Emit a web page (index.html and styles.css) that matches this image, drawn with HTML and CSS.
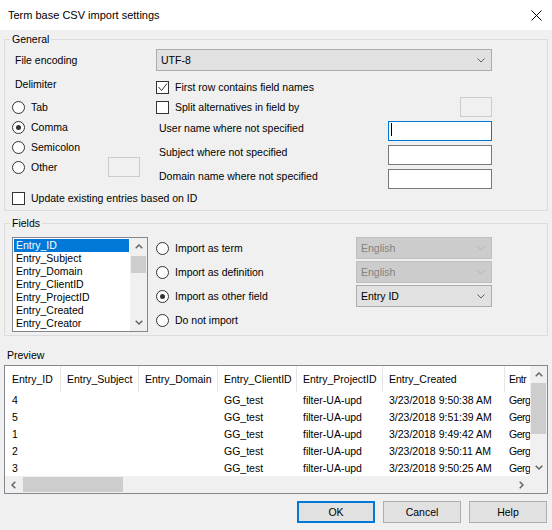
FILE: index.html
```html
<!DOCTYPE html>
<html>
<head>
<meta charset="utf-8">
<title>Term base CSV import settings</title>
<link rel="stylesheet" href="styles.css">
</head>
<body>
<div class="titlebar">
  <span class="title">Term base CSV import settings</span>
  <svg class="close" width="11" height="11" viewBox="0 0 11 11"><path d="M0.5 0.5L10.5 10.5M10.5 0.5L0.5 10.5" stroke="#000" stroke-width="1" fill="none"/></svg>
</div>

<fieldset class="group general">
  <legend>General</legend>
  <div class="gen">
    <div class="gen-left">
      <div class="lrow enc">File encoding</div>
      <div class="lrow delim">Delimiter</div>
      <div class="rrow first"><span class="radio"></span><span>Tab</span></div>
      <div class="rrow"><span class="radio on"></span><span>Comma</span></div>
      <div class="rrow"><span class="radio"></span><span>Semicolon</span></div>
      <div class="rrow"><span class="radio"></span><span>Other</span><span class="tbox off small push"></span></div>
      <div class="rrow update"><span class="check"></span><span>Update existing entries based on ID</span></div>
    </div>
    <div class="gen-right">
      <div class="combo enc-combo"><span>UTF-8</span><svg class="chev" width="8" height="5" viewBox="0 0 8 5"><polyline points="0.5,0.5 4,4 7.5,0.5" fill="none" stroke="#606060" stroke-width="1"/></svg></div>
      <div class="crow first"><span class="check"><svg width="11" height="11" viewBox="0 0 11 11"><polyline points="1.5,5 4.5,8.5 10,1.5" fill="none" stroke="#333" stroke-width="1"/></svg></span><span>First row contains field names</span></div>
      <div class="crow"><span class="check"></span><span>Split alternatives in field by</span><span class="tbox off small push"></span></div>
      <div class="frow first"><span class="flabel">User name where not specified</span><span class="tbox wide focus"><span class="caret"></span></span></div>
      <div class="frow"><span class="flabel">Subject where not specified</span><span class="tbox wide"></span></div>
      <div class="frow"><span class="flabel">Domain name where not specified</span><span class="tbox wide"></span></div>
    </div>
  </div>
</fieldset>

<fieldset class="group fields">
  <legend>Fields</legend>
  <div class="fields-body">
    <div class="listbox">
      <div class="lb-items">
        <div class="lb-item sel">Entry_ID</div>
        <div class="lb-item">Entry_Subject</div>
        <div class="lb-item">Entry_Domain</div>
        <div class="lb-item">Entry_ClientID</div>
        <div class="lb-item">Entry_ProjectID</div>
        <div class="lb-item">Entry_Created</div>
        <div class="lb-item">Entry_Creator</div>
      </div>
      <div class="vscroll lb-scroll">
        <div class="arrow"><svg width="8" height="5" viewBox="0 0 8 5"><polyline points="0.7,4.3 4,1 7.3,4.3" fill="none" stroke="#606060" stroke-width="1.4"/></svg></div>
        <div class="thumb lb-thumb"></div>
        <div class="arrow end"><svg width="8" height="5" viewBox="0 0 8 5"><polyline points="0.7,0.7 4,4 7.3,0.7" fill="none" stroke="#606060" stroke-width="1.4"/></svg></div>
      </div>
    </div>
    <div class="opts">
      <div class="orow"><span class="radio"></span><span>Import as term</span></div>
      <div class="combo off"><span>English</span><svg class="chev" width="8" height="5" viewBox="0 0 8 5"><polyline points="0.5,0.5 4,4 7.5,0.5" fill="none" stroke="#b4b4b4" stroke-width="1"/></svg></div>
      <div class="orow"><span class="radio"></span><span>Import as definition</span></div>
      <div class="combo off"><span>English</span><svg class="chev" width="8" height="5" viewBox="0 0 8 5"><polyline points="0.5,0.5 4,4 7.5,0.5" fill="none" stroke="#b4b4b4" stroke-width="1"/></svg></div>
      <div class="orow"><span class="radio on"></span><span>Import as other field</span></div>
      <div class="combo"><span>Entry ID</span><svg class="chev" width="8" height="5" viewBox="0 0 8 5"><polyline points="0.5,0.5 4,4 7.5,0.5" fill="none" stroke="#606060" stroke-width="1"/></svg></div>
      <div class="orow"><span class="radio"></span><span>Do not import</span></div>
    </div>
  </div>
</fieldset>

<div class="preview-label">Preview</div>
<div class="listview">
  <div class="lv-content">
    <div class="lv-row lv-head">
      <div>Entry_ID</div><div>Entry_Subject</div><div>Entry_Domain</div><div>Entry_ClientID</div><div>Entry_ProjectID</div><div>Entry_Created</div><div>Entr</div>
    </div>
    <div class="lv-row"><div>4</div><div></div><div></div><div>GG_test</div><div>filter-UA-upd</div><div>3/23/2018 9:50:38 AM</div><div>Gerg</div></div>
    <div class="lv-row"><div>5</div><div></div><div></div><div>GG_test</div><div>filter-UA-upd</div><div>3/23/2018 9:51:39 AM</div><div>Gerg</div></div>
    <div class="lv-row"><div>1</div><div></div><div></div><div>GG_test</div><div>filter-UA-upd</div><div>3/23/2018 9:49:42 AM</div><div>Gerg</div></div>
    <div class="lv-row"><div>2</div><div></div><div></div><div>GG_test</div><div>filter-UA-upd</div><div>3/23/2018 9:50:11 AM</div><div>Gerg</div></div>
    <div class="lv-row"><div>3</div><div></div><div></div><div>GG_test</div><div>filter-UA-upd</div><div>3/23/2018 9:50:25 AM</div><div>Gerg</div></div>
  </div>
  <div class="vscroll lv-vscroll">
    <div class="arrow"><svg width="8" height="5" viewBox="0 0 8 5"><polyline points="0.7,4.3 4,1 7.3,4.3" fill="none" stroke="#606060" stroke-width="1.4"/></svg></div>
    <div class="thumb lv-vthumb"></div>
    <div class="arrow end"><svg width="8" height="5" viewBox="0 0 8 5"><polyline points="0.7,0.7 4,4 7.3,0.7" fill="none" stroke="#606060" stroke-width="1.4"/></svg></div>
  </div>
  <div class="hscroll">
    <div class="arrow"><svg width="5" height="8" viewBox="0 0 5 8"><polyline points="4.3,0.7 1,4 4.3,7.3" fill="none" stroke="#606060" stroke-width="1.4"/></svg></div>
    <div class="thumb lv-hthumb"></div>
    <div class="arrow end"><svg width="5" height="8" viewBox="0 0 5 8"><polyline points="0.7,0.7 4,4 0.7,7.3" fill="none" stroke="#606060" stroke-width="1.4"/></svg></div>
  </div>
  <div class="corner"></div>
</div>

<div class="buttons">
  <div class="btn default">OK</div>
  <div class="btn">Cancel</div>
  <div class="btn">Help</div>
</div>
</body>
</html>
```

FILE: styles.css
```css
html, body {
  margin: 0;
  padding: 0;
}
body {
  width: 552px;
  height: 530px;
  overflow: hidden;
  background: #f0f0f0;
  font-family: "Liberation Sans", Arial, sans-serif;
  font-size: 10.5px;
  line-height: 12px;
  color: #000;
}
* { box-sizing: border-box; }

.titlebar {
  height: 30px;
  background: #fff;
  display: flex;
  align-items: center;
  justify-content: space-between;
  padding: 0 10px 0 8px;
}
.title {
  font-size: 11px;
  line-height: 14px;
}
.close { display: block; }

.group {
  margin: 3px 4px 0;
  padding: 0;
  border: 1px solid #dcdcdc;
  min-width: 0;
}
.group legend {
  margin-left: 5px;
  padding: 0 2px;
  line-height: 12px;
}
.general { height: 178px; }
.fields { height: 119px; margin-top: 6px; }

.gen { display: flex; }
.gen-left { width: 151px; flex: none; }
.gen-right { flex: 1; padding-right: 55px; }

.lrow {
  height: 20px;
  display: flex;
  align-items: center;
  padding-left: 10px;
}
.lrow.enc { margin-top: 4px; height: 22px; }
.lrow.delim { margin-top: 3px; }

.rrow {
  height: 20px;
  display: flex;
  align-items: center;
  gap: 6px;
  padding-left: 7px;
  padding-right: 16px;
  white-space: nowrap;
}
.rrow.first { margin-top: 3px; }
.rrow.update { margin-top: 11px; }

.radio {
  flex: none;
  width: 13px;
  height: 13px;
  border: 1px solid #333;
  border-radius: 50%;
  background: #fff;
  display: flex;
  align-items: center;
  justify-content: center;
}
.radio.on::after {
  content: "";
  width: 5px;
  height: 5px;
  border-radius: 50%;
  background: #333;
}
.check {
  flex: none;
  width: 13px;
  height: 13px;
  border: 1px solid #333;
  background: #fff;
  display: flex;
}
.check svg { display: block; }

.tbox {
  display: flex;
  align-items: flex-start;
  height: 20px;
  background: #fff;
  border: 1px solid #7a7a7a;
  flex: none;
}
.tbox.small { width: 32px; }
.tbox.wide { width: 104px; }
.tbox.off { background: #f0f0f0; border-color: #cccccc; }
.tbox.focus { border-color: #0078d7; padding: 1px 0 0 2px; }
.caret { width: 1px; height: 13px; background: #000; }
.push { margin-left: auto; }

.combo {
  height: 22px;
  border: 1px solid #adadad;
  background: #e1e1e1;
  display: flex;
  align-items: center;
  padding: 0 6px 0 4px;
}
.combo .chev { margin-left: auto; display: block; }
.combo.off { background: #cccccc; border-color: #bfbfbf; color: #838383; }
.enc-combo { margin-top: 4px; }

.crow {
  height: 20px;
  display: flex;
  align-items: center;
  gap: 6px;
}
.crow.first { margin-top: 6px; }

.frow {
  height: 20px;
  margin-top: 4px;
  display: flex;
  justify-content: space-between;
  align-items: flex-start;
}
.flabel { padding: 1px 0 0 3px; }

/* Fields */
.fields-body {
  display: flex;
  margin-top: 8px;
  padding-left: 7px;
}
.listbox {
  width: 136px;
  height: 95px;
  border: 1px solid #828790;
  background: #fff;
  display: flex;
}
.lb-items {
  flex: 1;
  padding: 1px;
  overflow: hidden;
}
.lb-item {
  height: 13px;
  line-height: 13px;
  padding-left: 2px;
  white-space: nowrap;
}
.lb-item.sel { background: #0078d7; color: #fff; }

.vscroll {
  width: 17px;
  flex: none;
  background: #f0f0f0;
  display: flex;
  flex-direction: column;
}
.vscroll .arrow {
  height: 17px;
  flex: none;
  display: flex;
  align-items: center;
  justify-content: center;
}
.vscroll .arrow.end { margin-top: auto; }
.vscroll .thumb { margin: 0 1px; background: #cdcdcd; }
.lb-thumb { margin-top: 1px !important; height: 17px; }

.opts {
  margin-left: 8px;
  display: grid;
  grid-template-columns: 200px 136px;
  grid-auto-rows: 22px;
  row-gap: 2px;
}
.orow {
  display: flex;
  align-items: center;
  gap: 6px;
  white-space: nowrap;
}

/* Preview */
.preview-label {
  margin-top: 13px;
  padding-left: 7px;
  height: 12px;
}
.listview {
  margin: 4px 4px 0;
  height: 129px;
  border: 1px solid #828790;
  background: #fff;
  display: grid;
  grid-template-columns: 1fr 17px;
  grid-template-rows: 1fr 17px;
  overflow: hidden;
}
.lv-content { overflow: hidden; min-width: 0; }
.lv-row {
  display: grid;
  grid-template-columns: 56px 78px 79px 79px 86px 122px 25px;
  width: 525px;
  height: 17px;
  line-height: 17px;
  white-space: nowrap;
}
.lv-row > div { padding-left: 6px; overflow: hidden; }
.lv-row > div:first-child { padding-left: 7px; }
.lv-row > div:last-child { padding-left: 4px; letter-spacing: -0.5px; }
.lv-head { height: 26px; line-height: 26px; }
.lv-head > div { border-right: 1px solid #e5e5e5; }
.lv-head > div:last-child { border-right: 0; }

.lv-vscroll { width: 17px; }
.lv-vthumb { height: 51px; }

.hscroll {
  background: #f0f0f0;
  display: flex;
  min-width: 0;
}
.hscroll .arrow {
  width: 17px;
  flex: none;
  display: flex;
  align-items: center;
  justify-content: center;
}
.hscroll .arrow.end { margin-left: auto; }
.lv-hthumb {
  width: 100px;
  margin: 1px 0 1px 1px;
  background: #cdcdcd;
}
.corner { background: #f0f0f0; }

/* Buttons */
.buttons {
  margin-top: 7px;
  display: flex;
  justify-content: flex-end;
  gap: 8px;
  padding-right: 5px;
}
.btn {
  width: 78px;
  height: 22px;
  border: 1px solid #adadad;
  background: #e1e1e1;
  display: flex;
  align-items: center;
  justify-content: center;
}
.btn.default { border: 2px solid #0078d7; }
```
